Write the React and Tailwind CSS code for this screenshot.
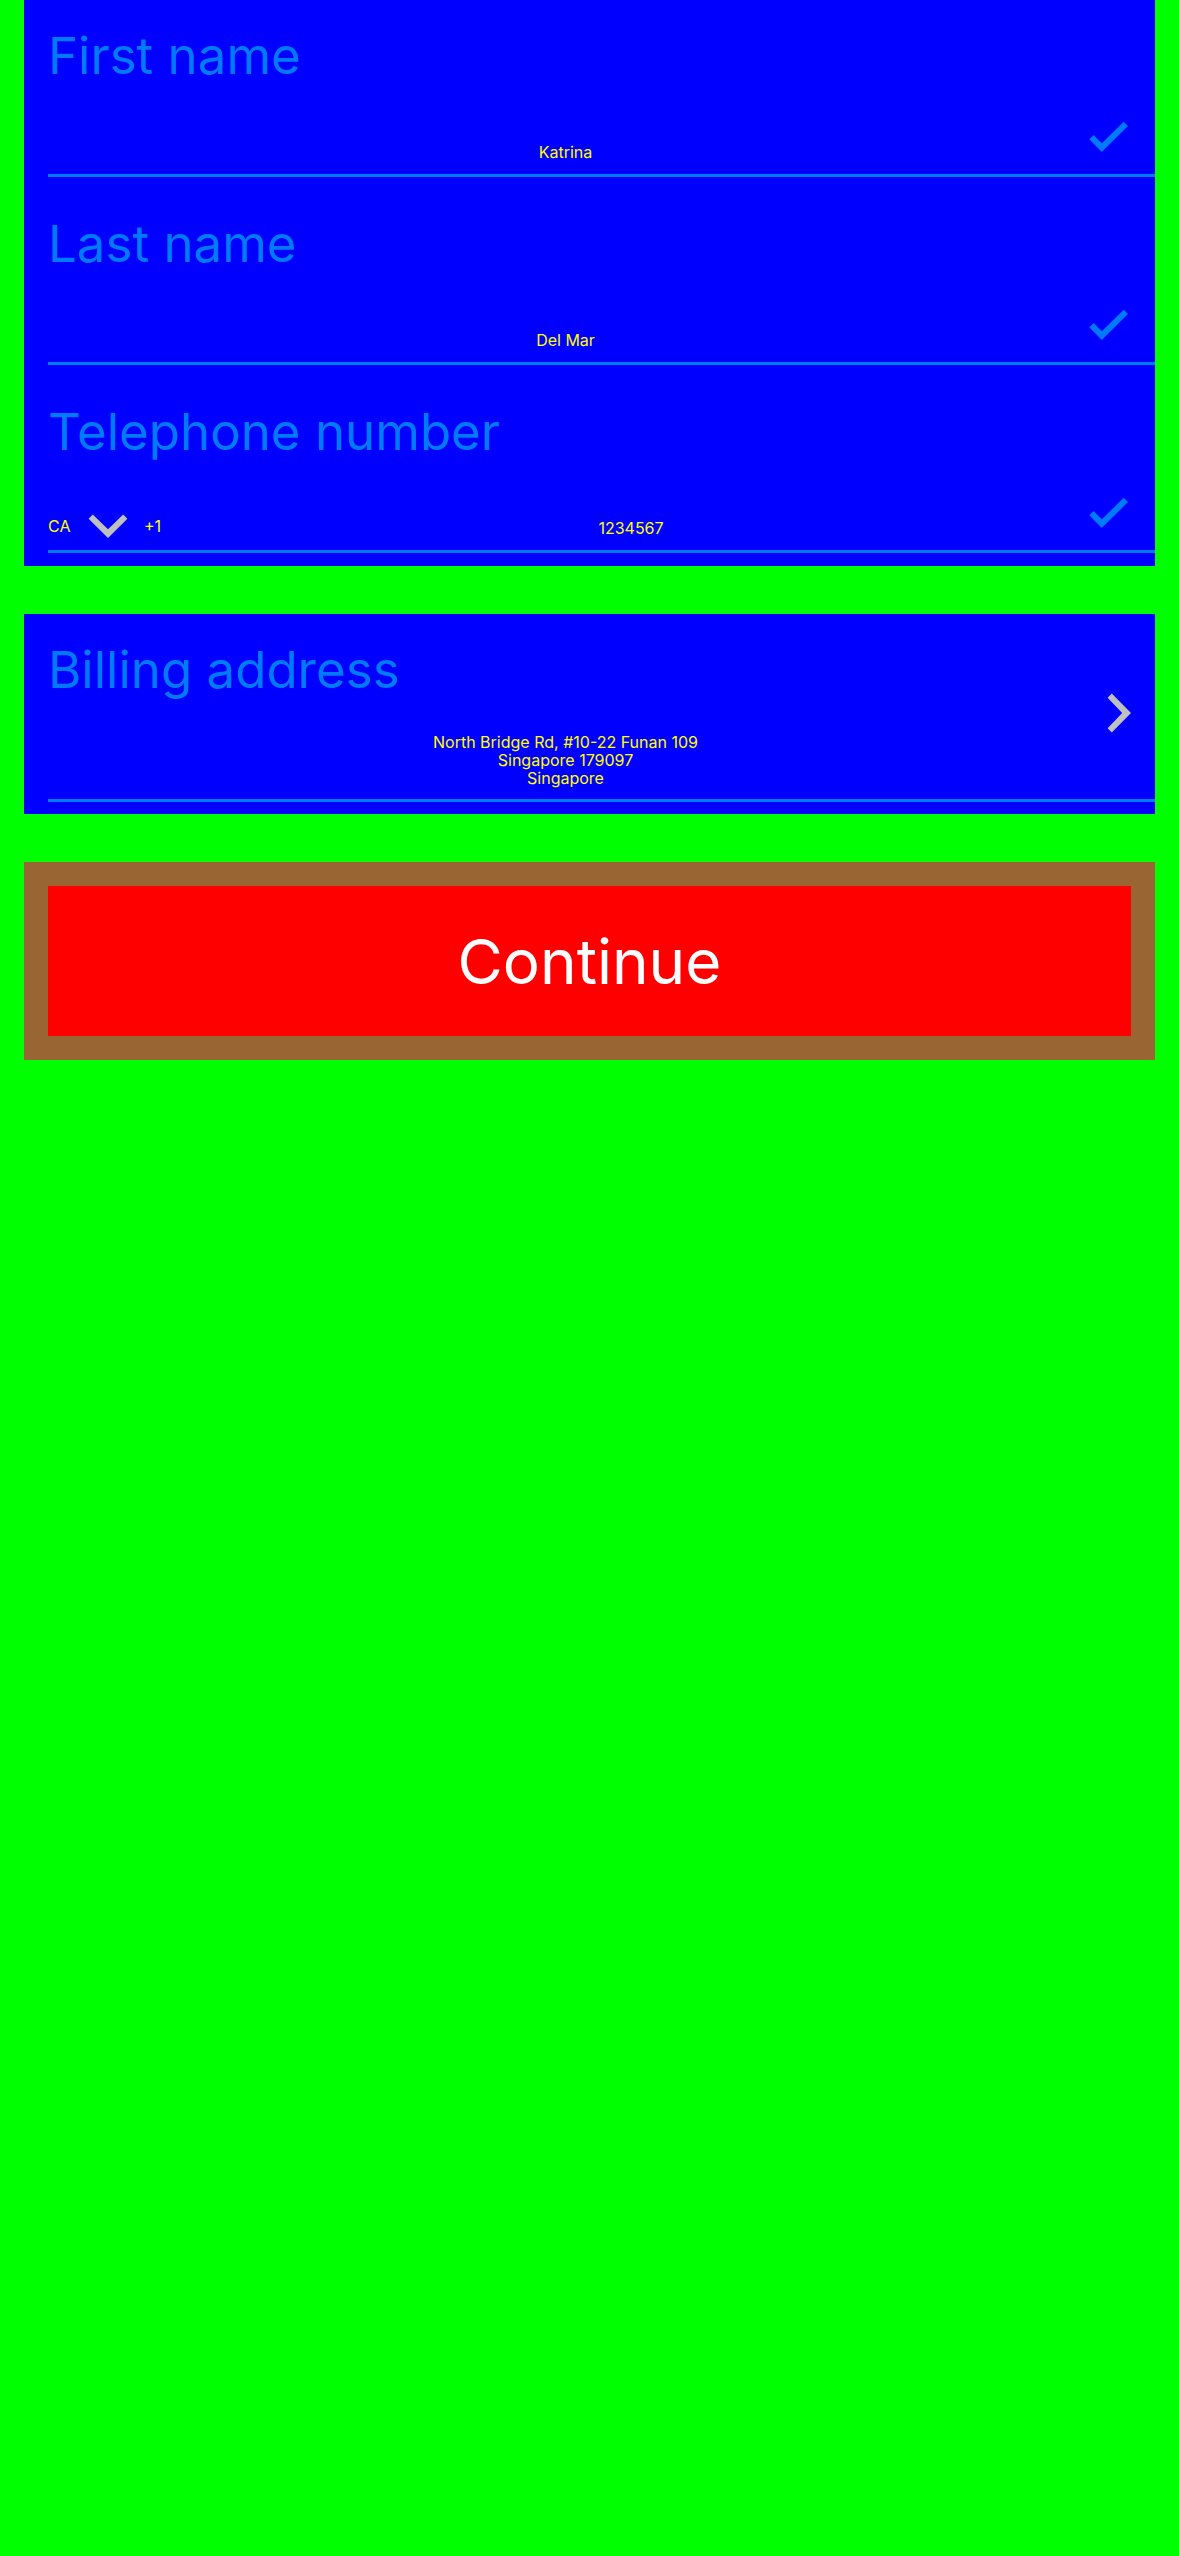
import React from "react";

function CheckIcon() {
  return (
    <svg viewBox="0 0 48 48" className="size-12 shrink-0 fill-[#007aff]" aria-hidden="true">
      <path d="M6.3 26.3 10.6 22 18.8 30.3 40.7 8.8 45 13.1 18.8 39Z" />
    </svg>
  );
}

function ChevronIcon({ className }) {
  return (
    <svg viewBox="0 0 40 24" className={className} aria-hidden="true">
      <path d="M0.6 4.8 4.8 0.6 20 15.2 35.2 0.6 39.4 4.8 20 24Z" />
    </svg>
  );
}

const labelStyle = "text-[51px] leading-[64px] font-normal text-[#007aff]";
const valueStyle = "text-[16px] leading-[18px] text-[#ffff00]";

function Field({ id, label, value, type = "text", children }) {
  return (
    <div className="ml-6 flex h-[177px] flex-col border-b-[3px] border-[#007aff] pt-6 pr-6">
      <label htmlFor={id} className={labelStyle}>
        {label}
      </label>
      <div className="mt-[25px] flex items-start">
        {children}
        <input
          id={id}
          type={type}
          defaultValue={value}
          className={`mt-[30px] min-w-0 flex-1 bg-transparent text-center outline-none ${valueStyle}`}
        />
        <CheckIcon />
      </div>
    </div>
  );
}

export default function App() {
  return (
    <main className="flex min-h-screen flex-col gap-12 bg-[#00ff00] px-6 font-['Inter',sans-serif]">
      <section className="flex flex-col gap-[11px] bg-[#0000ff] pb-[13px]">
        <Field id="first-name" label="First name" value="Katrina" />
        <Field id="last-name" label="Last name" value="Del Mar" />
        <Field id="telephone" label="Telephone number" value="1234567" type="tel">
          <div className={`relative mt-7 flex w-[131px] items-center ${valueStyle}`}>
            <select
              aria-label="Country"
              defaultValue="CA"
              className="w-20 appearance-none bg-transparent outline-none"
            >
              <option>CA</option>
            </select>
            <ChevronIcon className="pointer-events-none absolute left-10 h-6 w-10 fill-[#c0c0c0]" />
            <span className="ml-4">+1</span>
          </div>
        </Field>
      </section>

      <button type="button" className="flex flex-col bg-[#0000ff] pt-6 pb-3 pl-6 text-left">
        <span className="flex w-full items-center border-b-[3px] border-[#007aff] pr-6 pb-3">
          <span className="flex flex-1 flex-col">
            <span className={labelStyle}>Billing address</span>
            <span className={`mt-[31px] pr-6 text-center ${valueStyle}`}>
              North Bridge Rd, #10-22 Funan 109
              <br />
              Singapore 179097
              <br />
              Singapore
            </span>
          </span>
          <ChevronIcon className="-mx-2 h-6 w-10 -rotate-90 fill-[#c0c0c0]" />
        </span>
      </button>

      <div className="bg-[#996633] p-6">
        <button type="button" className="h-[150px] w-full bg-[#ff0000] pt-0.5 text-[62px] leading-none text-white">
          Continue
        </button>
      </div>
    </main>
  );
}
